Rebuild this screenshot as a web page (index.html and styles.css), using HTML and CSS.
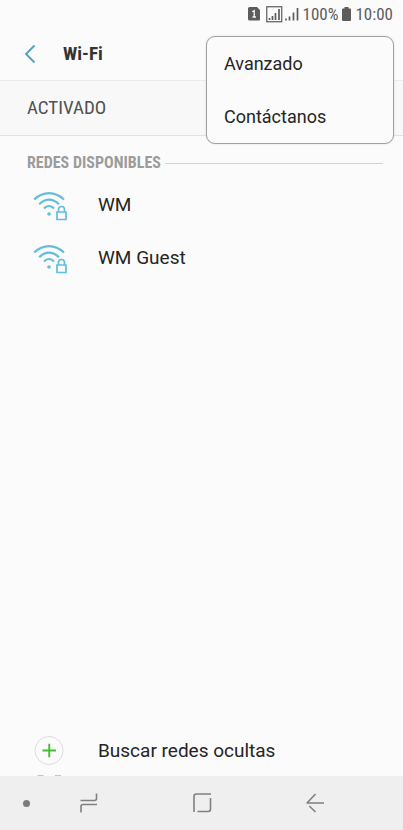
FILE: index.html
```html
<!DOCTYPE html>
<html lang="es">
<head>
<meta charset="utf-8">
<meta name="viewport" content="width=device-width, initial-scale=1">
<title>Wi-Fi</title>
<link rel="stylesheet" href="styles.css">
</head>
<body>
<div class="screen">
  <div class="status">
    <svg width="12" height="14" viewBox="0 0 12 14" aria-hidden="true"><path d="M1.500 0H9l3 3v9.500a1 1 0 0 1-1 1H1.500a1.500 1.500 0 0 1-1.500-1.500V1.500A1.500 1.500 0 0 1 1.500 0z" fill="#5c5c5c"/><path d="M4.300 4.800 6.200 3.600v6.400M4.500 10h3.400" fill="none" stroke="#fafafa" stroke-width="1.300"/></svg>
    <svg class="signal-boxed" width="17" height="17" viewBox="0 0 17 17" aria-hidden="true"><rect x=".75" y=".75" width="15" height="15" fill="none" stroke="#5c5c5c" stroke-width="1.200"/><path d="M3.500 14v-2M6.500 14v-4M9.500 14V7M13 14V3" stroke="#5c5c5c" stroke-width="1.700"/></svg>
    <svg class="signal" width="14" height="14" viewBox="0 0 14 14" aria-hidden="true"><path d="M1 13.500v-2M4.500 13.500v-4M8.500 13.500v-8M12.500 13.500V1" stroke="#5c5c5c" stroke-width="1.700"/></svg>
    <span>100%</span>
    <svg class="battery" width="9" height="14" viewBox="0 0 9 14" aria-hidden="true"><path d="M2.500 0h4v1.500H8a1 1 0 0 1 1 1V13a1 1 0 0 1-1 1H1a1 1 0 0 1-1-1V2.500a1 1 0 0 1 1-1h1.500z" fill="#5c5c5c"/></svg>
    <span>10:00</span>
  </div>
  <header class="header">
    <button class="back" aria-label="Atrás"><svg width="12" height="20" viewBox="0 0 12 20" aria-hidden="true"><path d="M10.500 1.500 2 10l8.500 8.500" fill="none" stroke="#4c9fc4" stroke-width="1.800"/></svg></button>
    <h1 class="title">Wi-Fi</h1>
    <div class="menu" role="menu">
      <button class="menu-item" role="menuitem">Avanzado</button>
      <button class="menu-item" role="menuitem">Contáctanos</button>
    </div>
  </header>
  <div class="state">ACTIVADO</div>
  <main class="content">
    <h2 class="section">REDES DISPONIBLES</h2>
    <button class="row">
      <svg class="row-icon" width="36" height="32" viewBox="0 0 36 32" aria-hidden="true"><g fill="none" stroke="#63bddb" stroke-width="2.200"><path d="M1.200 10.500Q8 4.200 16 4.200t15 6.300M6.200 15.200Q11 10.700 16 10.700t10 4.500M11 19.500q2-2.500 5-2.500t5 2.500"/><path d="M24 23h9v7.500h-9zM25.500 23v-2.500a3 3 0 0 1 6 0V23" stroke-width="1.700"/></g><circle cx="16" cy="25" r="1.800" fill="#63bddb"/></svg>
      <span>WM</span>
    </button>
    <button class="row">
      <svg class="row-icon" width="36" height="32" viewBox="0 0 36 32" aria-hidden="true"><g fill="none" stroke="#63bddb" stroke-width="2.200"><path d="M1.200 10.500Q8 4.200 16 4.200t15 6.300M6.200 15.200Q11 10.700 16 10.700t10 4.500M11 19.500q2-2.500 5-2.500t5 2.500"/><path d="M24 23h9v7.500h-9zM25.500 23v-2.500a3 3 0 0 1 6 0V23" stroke-width="1.700"/></g><circle cx="16" cy="25" r="1.800" fill="#63bddb"/></svg>
      <span>WM Guest</span>
    </button>
    <button class="row search">
      <svg class="row-icon" width="36" height="32" viewBox="0 0 36 32" aria-hidden="true"><circle cx="16" cy="15.500" r="14" fill="none" stroke="#dcdcdc"/><path d="M9.500 15.500h13.500M16.250 8.750v13.500" stroke="#45bd32" stroke-width="1.900"/></svg>
      <span>Buscar redes ocultas</span>
    </button>
    <svg class="peek" width="36" height="1" viewBox="0 0 36 1" aria-hidden="true"><path d="M4.500 .5h6M22 .5h6" fill="none" stroke="#c4c4c4"/></svg>
  </main>
  <nav class="nav">
    <span class="nav-dot"></span>
    <button class="nav-button" aria-label="Recientes"><svg width="20" height="22" viewBox="0 0 20 22" aria-hidden="true"><path d="M1.500 8.500h14q2 0 2-2v-5M18 12.500H4q-2 0-2 2v6" fill="none" stroke="#808080" stroke-width="1.600"/></svg></button>
    <button class="nav-button" aria-label="Inicio"><svg width="20" height="22" viewBox="0 0 20 22" aria-hidden="true"><path d="M2 20V4.500q0-2.500 2.500-2.500H19M18.500 6v11q0 2.500-2.500 2.500H5.500" fill="none" stroke="#808080" stroke-width="1.600"/></svg></button>
    <button class="nav-button" aria-label="Volver"><svg width="20" height="22" viewBox="0 0 20 22" aria-hidden="true"><path d="M19 11H2l8.500-9M4.300 14l6.200 6" fill="none" stroke="#808080" stroke-width="1.600" stroke-linejoin="round"/></svg></button>
  </nav>
</div>
</body>
</html>
```
FILE: styles.css
```css
* {
  box-sizing: border-box;
}

body {
  margin: 0;
  background: #fbfbfb;
  color: #252525;
  font-family: Roboto, "Liberation Sans", sans-serif;
  font-size: 19px;
  line-height: 24px;
}

button {
  padding: 0;
  border: 0;
  background: none;
  color: inherit;
  font: inherit;
  text-align: left;
}

svg {
  display: block;
  flex: none;
}

.screen {
  display: flex;
  flex-direction: column;
  min-height: 100vh;
}

.status,
.title,
.state,
.section {
  font-family: "Roboto Condensed", "Liberation Sans Narrow", Roboto, sans-serif;
}

.status {
  display: flex;
  align-items: center;
  justify-content: flex-end;
  height: 28px;
  padding-right: 10px;
  color: #5c5c5c;
  font-size: 17px;
}

.signal-boxed {
  margin: 0 2px 0 6px;
}

.signal {
  margin-right: 4px;
}

.battery {
  margin: 0 4px;
}

.header {
  position: relative;
  display: flex;
  align-items: center;
  height: 53px;
  padding-left: 24px;
  border-bottom: 1px solid #ebebeb;
}

.title {
  margin: 0 0 0 27px;
  color: #333;
  font-size: 19px;
  font-weight: 700;
}

.menu {
  position: absolute;
  top: 8px;
  right: 9px;
  z-index: 1;
  display: flex;
  flex-direction: column;
  width: 188px;
  border: 1px solid #a0a0a0;
  border-radius: 9px;
  background: #fbfbfb;
  box-shadow: 0 0 2px rgba(0, 0, 0, 0.15);
}

.menu-item {
  height: 53px;
  padding-left: 17px;
  font-size: 18px;
}

.state {
  display: flex;
  align-items: center;
  height: 55px;
  padding-left: 27px;
  border-bottom: 1px solid #e2e2e2;
  background: #f8f8f8;
  color: #505050;
}

.content {
  display: flex;
  flex: 1;
  flex-direction: column;
}

.section {
  display: flex;
  align-items: center;
  gap: 4px;
  margin: 15px 20px 3px 27px;
  color: #9c9c9c;
  font-size: 16px;
  font-weight: 700;
}

.section::after {
  flex: 1;
  height: 1px;
  background: #d2d2d2;
  content: "";
}

.row {
  display: flex;
  align-items: center;
  gap: 29px;
  height: 53px;
  padding-left: 33px;
}

.search {
  margin-top: auto;
  margin-bottom: -2px;
}

.peek {
  margin-left: 33px;
}

.nav {
  display: flex;
  align-items: center;
  height: 54px;
  background: #efefef;
}

.nav-dot {
  width: 7px;
  height: 7px;
  margin: 0 3px 0 23px;
  border-radius: 50%;
  background: #7b7b7b;
}

.nav-button {
  display: flex;
  justify-content: center;
  width: 28%;
}
```
